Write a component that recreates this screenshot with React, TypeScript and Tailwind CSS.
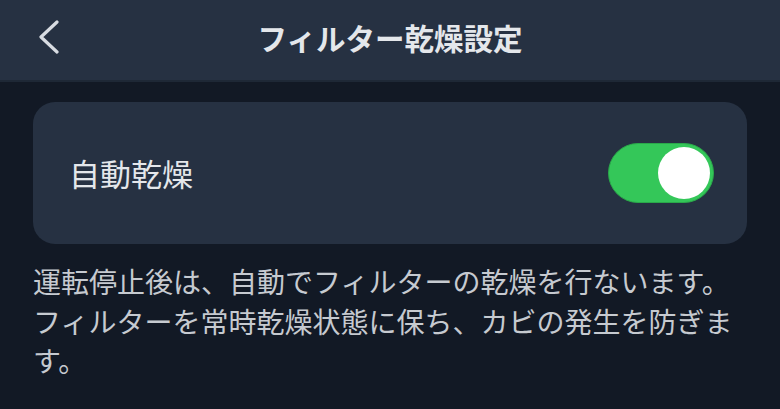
import React from "react";

export default function App() {
  const font = { fontFamily: '"Noto Sans CJK JP", "Noto Sans", sans-serif' };
  return (
    <div className="w-[780px] h-[409px] bg-[#121925] overflow-hidden" style={font}>
      <header className="relative h-[82px] bg-[#263142] border-b-2 border-[#1e2836] flex items-center justify-center pb-[6px]">
        <button className="absolute left-[34px] top-[18px] w-[30px] h-[38px] flex items-center justify-center">
          <svg width="24" height="34" viewBox="0 0 24 34" fill="none">
            <polyline points="20,2 4,17 20,32" stroke="#d8dce2" strokeWidth="3.2" strokeLinecap="round" strokeLinejoin="round" />
          </svg>
        </button>
        <h1 className="text-[29.5px] font-semibold text-[#e4e7eb]">フィルター乾燥設定</h1>
      </header>
      <main className="px-[33px] pt-[20px]">
        <div className="h-[142px] rounded-[22px] bg-[#263142] flex items-center justify-between pl-[36px] pr-[33px]">
          <span className="text-[31px] text-[#e4e7eb]">自動乾燥</span>
          <div className="w-[106px] h-[60px] rounded-full bg-[#34c759] border border-[#2aa84a] flex items-center justify-end pr-[3px]">
            <div className="w-[52px] h-[52px] rounded-full bg-white" />
          </div>
        </div>
        <p className="mt-[18px] text-[28px] leading-[39.5px] text-[#c6cad0]">
          運転停止後は、自動でフィルターの乾燥を行ないます。フィルターを常時乾燥状態に保ち、カビの発生を防ぎます。
        </p>
      </main>
    </div>
  );
}
